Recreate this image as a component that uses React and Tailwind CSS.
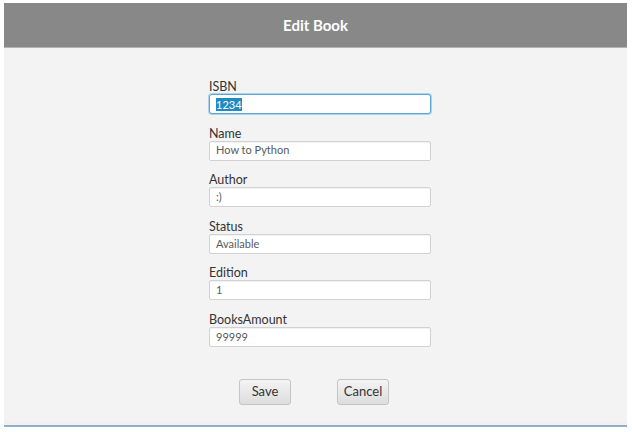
import React from "react";

const font = { fontFamily: 'Lato, "Noto Sans", sans-serif' };

function Field({ label, value, focused }) {
  return (
    <div className="flex flex-col">
      <div className="text-[12.5px] leading-[14px] text-[#333]">{label}</div>
      {focused ? (
        <div className="h-[20px] w-[222px] rounded-[3px] border border-[#5aa8d2] shadow-[0_0_0_1px_#a9d3ea] bg-white flex items-center pl-[6px]">
          <span className="bg-[#1f8bc4] text-white text-[11px] leading-[13px]">1234</span>
        </div>
      ) : (
        <div className="h-[20px] w-[222px] rounded-[2px] border border-[#d2d2d2] bg-white shadow-[inset_0_1px_1px_rgba(0,0,0,0.06)] flex items-center pl-[6px] text-[11px] text-[#5a5a5a]">
          {value}
        </div>
      )}
    </div>
  );
}

export default function App() {
  return (
    <div className="w-[632px] h-[432px] bg-white overflow-hidden" style={font}>
      <div className="ml-[4px] mt-[3px] w-[623px] flex flex-col">
        <div className="h-[44px] bg-[#888888] flex items-center justify-center">
          <span className="text-white font-bold text-[15px]">Edit Book</span>
        </div>
        <div className="h-[1px] bg-[#b4b4b4]" />
        <div className="h-[373px] bg-[#f3f3f3] flex flex-col">
          <div className="ml-[205px] mt-[32px] flex flex-col gap-[12.6px]">
            <Field label="ISBN" focused />
            <Field label="Name" value="How to Python" />
            <Field label="Author" value=":)" />
            <Field label="Status" value="Available" />
            <Field label="Edition" value="1" />
            <Field label="BooksAmount" value="99999" />
          </div>
          <div className="ml-[235px] mt-[32px] flex gap-[46px]">
            <button className="w-[52px] h-[26px] rounded-[3px] border border-[#c4c4c4] bg-gradient-to-b from-[#f4f4f4] to-[#dddddd] text-[13px] text-[#333]">
              Save
            </button>
            <button className="w-[52px] h-[26px] rounded-[3px] border border-[#c4c4c4] bg-gradient-to-b from-[#f4f4f4] to-[#dddddd] text-[13px] text-[#333]">
              Cancel
            </button>
          </div>
        </div>
        <div className="h-[4px] bg-[#f7eef1]" />
        <div className="h-[2px] bg-[#86b3c6]" />
      </div>
    </div>
  );
}
